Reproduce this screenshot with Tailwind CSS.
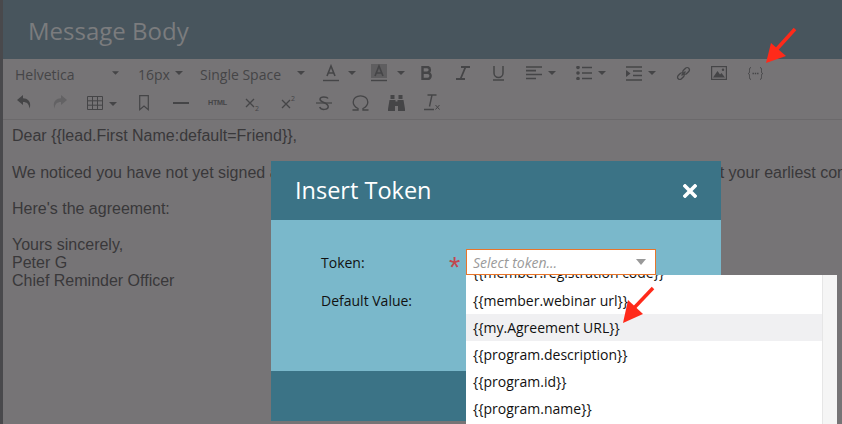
<!DOCTYPE html>
<html><head><meta charset="utf-8"><script src="https://cdn.jsdelivr.net/npm/@tailwindcss/browser@4"></script></head>
<body class="m-0 overflow-hidden">
<div class="relative w-[842px] h-[424px] overflow-hidden flex bg-[#767476]">
  <div class="w-[3px] h-full bg-[#49494c] shrink-0"></div>
  <main class="flex-1 min-w-0 flex flex-col">
    <header class="h-[59px] bg-[#48555d] pl-[25px] pt-[11px] text-[24px] leading-[40px] text-[#7b7c7e] font-['Open_Sans',sans-serif]">Message Body</header>
    <div class="h-[61px] border-b border-[#6b696b] font-['Open_Sans',sans-serif] text-[14px] text-[#454547] pl-[12px]">
      <div class="h-[28px] flex items-center">
        <span class="w-[97px] mt-[2px]">Helvetica</span>
        <svg class="w-[7px] h-[4px]" viewBox="0 0 8 4"><path d="M0 0h8L4 4z" fill="#454547"/></svg>
        <span class="ml-[19px] w-[37px] mt-[2px]">16px</span>
        <svg class="w-[8px] h-[4px]" viewBox="0 0 8 4"><path d="M0 0h8L4 4z" fill="#454547"/></svg>
        <span class="ml-[17px] w-[97px] whitespace-nowrap mt-[2px]">Single Space</span>
        <svg class="w-[8px] h-[4px]" viewBox="0 0 8 4"><path d="M0 0h8L4 4z" fill="#454547"/></svg>
        <svg class="ml-[18px] w-[16px] h-[19px]" viewBox="0 0 16 19" fill="none"><path d="M4 12 8 2l4 10M5.500 9h5" stroke="#454547" stroke-width="1.600"/><path d="M0 16.500h16" stroke="#454547" stroke-width="1.400"/></svg>
        <svg class="ml-[9px] w-[8px] h-[4px]" viewBox="0 0 8 4"><path d="M0 0h8L4 4z" fill="#454547"/></svg>
        <svg class="ml-[15px] w-[16px] h-[19px]" viewBox="0 0 16 19" fill="none"><path d="M0 0h16v14H0z" fill="#5f5e60"/><path d="M4 12 8 2l4 10M5.500 9h5" stroke="#454547" stroke-width="1.600"/><path d="M0 16.500h16" stroke="#454547" stroke-width="1.400"/></svg>
        <svg class="ml-[10px] w-[8px] h-[4px]" viewBox="0 0 8 4"><path d="M0 0h8L4 4z" fill="#454547"/></svg>
        <svg class="ml-[16px] w-[11px] h-[14px]" viewBox="0 0 11 14" fill="none"><path d="M1.500 1h4.500a2.700 2.700 0 0 1 0 5.700H1.500zM1.500 6.700h5a2.900 2.900 0 0 1 0 6.300h-5z" stroke="#454547" stroke-width="2.400"/></svg>
        <svg class="ml-[24px] w-[14px] h-[14px]" viewBox="0 0 14 14" fill="none"><path d="M5 1h9M0 13h9M9.500 1 4.500 13" stroke="#454547" stroke-width="1.800"/></svg>
        <svg class="ml-[23px] w-[11px] h-[15px]" viewBox="0 0 11 15" fill="none"><path d="M1 0v7a4.500 4.500 0 0 0 9 0V0M0 14h11" stroke="#454547" stroke-width="1.500"/></svg>
        <svg class="ml-[22px] w-[16px] h-[14px]" viewBox="0 0 16 14" fill="none"><path d="M0 1h16M0 4.700h10M0 8.500h16M0 12.500h10" stroke="#454547" stroke-width="1.700"/></svg>
        <svg class="ml-[6px] w-[8px] h-[4px]" viewBox="0 0 8 4"><path d="M0 0h8L4 4z" fill="#454547"/></svg>
        <svg class="ml-[20px] w-[16px] h-[14px]" viewBox="0 0 16 14" fill="none"><path d="M6 1.500h10M6 7h10M6 12.500h10" stroke="#454547" stroke-width="1.700"/><circle cx="2" cy="1.500" r="1.800" fill="#454547"/><circle cx="2" cy="7" r="1.800" fill="#454547"/><circle cx="2" cy="12.500" r="1.800" fill="#454547"/></svg>
        <svg class="ml-[6px] w-[8px] h-[4px]" viewBox="0 0 8 4"><path d="M0 0h8L4 4z" fill="#454547"/></svg>
        <svg class="ml-[20px] w-[16px] h-[15px]" viewBox="0 0 16 15" fill="none"><path d="M0 1h16M7 5h9M7 9.500h9M0 14h16" stroke="#454547" stroke-width="1.700"/><path d="M0 4v7l4.500-3.500z" fill="#454547"/></svg>
        <svg class="ml-[6px] w-[8px] h-[4px]" viewBox="0 0 8 4"><path d="M0 0h8L4 4z" fill="#454547"/></svg>
        <svg class="ml-[20px] w-[15px] h-[15px]" viewBox="0 0 15 15" fill="none"><g stroke="#454547" stroke-width="1.300"><rect x="-2.800" y="-2.300" width="7.500" height="4.600" rx="2.300" transform="translate(4.200 10.800) rotate(-45)"/><rect x="-4.700" y="-2.300" width="7.500" height="4.600" rx="2.300" transform="translate(10.800 4.200) rotate(-45)"/><path d="M5.500 9.500 9.500 5.500"/></g></svg>
        <svg class="ml-[20px] w-[16px] h-[14px]" viewBox="0 0 16 14" fill="none"><rect x=".6" y=".6" width="14.800" height="12.800" stroke="#454547" stroke-width="1.200"/><path d="M2 11.500 6.500 5 9 8.500l1.500-1.500 3.500 4.500z" fill="#454547"/><circle cx="12" cy="3.800" r="1.200" fill="#454547"/></svg>
        <svg class="ml-[21px] w-[15px] h-[13px]" viewBox="0 0 15 13" fill="none"><path d="M3 .6C1.500.6 1.500 1.500 1.500 3.500S1.500 6 .4 6.500C1.500 7 1.500 8 1.500 9.500s0 2.900 1.500 2.900M12 .6c1.500 0 1.500.9 1.500 2.900s0 2.500 1.100 3c-1.100.5-1.100 1.500-1.100 3s0 2.900-1.500 2.900" stroke="#454547"/><path d="M4.500 6.500h1.400M6.800 6.500h1.400M9.100 6.500h1.400" stroke="#454547" stroke-width="1.400"/></svg>
      </div>
      <div class="h-[31px] flex items-center">
        <svg class="ml-[2px] w-[14px] h-[15px]" viewBox="0 0 14 15"><path d="M6 0 0 5l6 5V7c4 0 6 2 6.500 6.500C14.500 8 12 3.500 6 3.300z" fill="#454547"/></svg>
        <svg class="ml-[22px] w-[14px] h-[15px]" viewBox="0 0 14 15"><path d="M8 0l6 5-6 5V7C4 7 2 9 1.500 13.500-.5 8 2 3.500 8 3.300z" fill="#636264"/></svg>
        <svg class="ml-[20px] w-[16px] h-[14px]" viewBox="0 0 16 14" fill="none"><path d="M.5.500h15v13H.5zM.5 4.800h15M.5 9.200h15M5.500.500v13M10.500.500v13" stroke="#454547"/></svg>
        <svg class="ml-[6px] w-[8px] h-[4px] mt-[3px]" viewBox="0 0 8 4"><path d="M0 0h8L4 4z" fill="#454547"/></svg>
        <svg class="ml-[22px] w-[10px] h-[16px]" viewBox="0 0 10 16" fill="none"><path d="M.7.700h8.600v14L5 11 .7 14.700z" stroke="#454547" stroke-width="1.200"/></svg>
        <svg class="ml-[24px] w-[16px] h-[2px]" viewBox="0 0 16 2"><path d="M0 0h16v2H0z" fill="#454547"/></svg>
        <span class="ml-[19px] w-[16px] text-[8px] font-bold leading-none font-['Liberation_Sans',sans-serif] tracking-[-0.3px] scale-x-90 origin-left">HTML</span>
        <span class="ml-[21px] w-[14px] h-[16px] relative"><svg class="w-[10px] h-[10px] mt-[3px]" viewBox="0 0 10 10" fill="none"><path d="M1 1l8 8M9 1 1 9" stroke="#454547" stroke-width="1.300"/></svg><span class="absolute left-[10px] top-[10px] text-[7px] leading-none">2</span></span>
        <span class="ml-[22px] w-[14px] h-[16px] relative"><svg class="w-[10px] h-[10px] mt-[4px]" viewBox="0 0 10 10" fill="none"><path d="M1 1l8 8M9 1 1 9" stroke="#454547" stroke-width="1.300"/></svg><span class="absolute left-[10px] top-[0px] text-[7px] leading-none">2</span></span>
        <svg class="ml-[21px] w-[16px] h-[16px]" viewBox="0 0 16 16" fill="none"><path d="M12 3.500C11 1.500 4.500 1 4 4c-.5 3.500 8 3.500 8.200 7.500C12.400 15 5 15.500 3.700 12" stroke="#454547" stroke-width="1.500"/><path d="M0 8h16" stroke="#454547" stroke-width="1.200"/></svg>
        <svg class="ml-[20px] w-[17px] h-[16px]" viewBox="0 0 17 16" fill="none"><path d="M.5 15h5.500v-1.500C3 12 1.200 10 1.200 7 1.200 3.500 4.500.8 8.500.8S15.800 3.500 15.800 7c0 3-1.800 5-4.800 6.500V15h5.500" stroke="#454547" stroke-width="1.300"/></svg>
        <svg class="ml-[19px] w-[17px] h-[16px]" viewBox="0 0 17 16"><path d="M2.500 0h4v4h-4zM10.500 0h4v4h-4zM1.500 5h6v1.500h2V5h6L17 14v2H10v-5H7v5H0v-2z" fill="#454547"/></svg>
        <svg class="ml-[19px] w-[17px] h-[17px]" viewBox="0 0 17 17" fill="none"><path d="M3.500 1h9M8 1 5.500 12.500M0 15.500h10" stroke="#454547" stroke-width="1.400"/><path d="M11.500 11l4 4.500M15.500 11l-4 4.500" stroke="#454547"/></svg>
      </div>
    </div>
    <article class="pl-[9px] pt-[7px] font-['Liberation_Sans',sans-serif] text-[16px] leading-[18px] text-[#39383a] whitespace-nowrap">
      <p>Dear {{lead.First Name:default=Friend}},</p>
      <p class="mt-[19px]">We noticed you have not yet signed a copy of our agreement. Please view the link here and sign it at your earliest convenience.</p>
      <p class="mt-[18px]">Here's the agreement:</p>
      <p class="mt-[18px]">Yours sincerely,</p>
      <p>Peter G</p>
      <p>Chief Reminder Officer</p>
    </article>
  </main>

  <section class="absolute left-[271px] top-[161px] w-[450px] h-[260px] flex flex-col font-['Open_Sans',sans-serif]">
    <div class="h-[59px] bg-[#3b7386] flex items-center justify-between pl-[24px] pr-[24px] text-white">
      <h2 class="text-[23.500px] leading-none">Insert Token</h2>
      <svg class="w-[14px] h-[14px]" viewBox="0 0 14 14" fill="none"><path d="M2 2l10 10M12 2 2 12" stroke="#fff" stroke-width="3.600" stroke-linecap="square"/></svg>
    </div>
    <div class="h-[151px] bg-[#7ab8cb] pl-[50px] pt-[29px] text-[14px] text-[#111]">
      <div class="h-[26px] flex items-center relative">
        <span>Token:</span>
        <span class="absolute left-[128px] top-[3px] text-[29px] leading-[30px] text-[#c2474f] font-['Liberation_Sans',sans-serif]">*</span>
      </div>
      <div class="mt-[12px] h-[26px] flex items-center">Default Value:</div>
    </div>
    <div class="h-[50px] bg-[#3b7386]"></div>
  </section>

  <div class="absolute left-[466px] top-[249px] w-[190px] h-[26px] bg-white border border-[#e8752a] flex items-center justify-between pl-[6px] pr-[9px] font-['Open_Sans',sans-serif] italic text-[14px] text-[#9a9a9a]">
    <span>Select token...</span>
    <svg class="w-[10px] h-[6px]" viewBox="0 0 10 6"><path d="M0 0h10L5 6z" fill="#999"/></svg>
  </div>
  <ul class="absolute left-[466px] top-[275px] w-[371px] h-[149px] bg-white flex flex-col font-['Open_Sans',sans-serif] text-[14px] text-[#111] overflow-hidden border-r-[15px] border-[#f5f5f5]">
    <li class="-mt-[15px] h-[26px] leading-[26px] pl-[7px] shrink-0">{{member.registration code}}</li>
    <li class="mt-[1px] h-[27px] leading-[27px] pl-[7px] shrink-0">{{member.webinar url}}</li>
    <li class="h-[27px] leading-[27px] pl-[7px] shrink-0 bg-[#f0f0f2]">{{my.Agreement URL}}</li>
    <li class="h-[27px] leading-[27px] pl-[7px] shrink-0">{{program.description}}</li>
    <li class="h-[27px] leading-[27px] pl-[7px] shrink-0">{{program.id}}</li>
    <li class="h-[27px] leading-[27px] pl-[7px] shrink-0">{{program.name}}</li>
  </ul>
  <div class="absolute left-[822px] top-[275px] w-px h-[149px] bg-[#e6e6e6]"></div>

  <svg class="absolute left-0 top-0 w-[842px] h-[424px] pointer-events-none" viewBox="0 0 842 424" fill="none">
    <path d="M795 29 776 50" stroke="#ff2a1a" stroke-width="3.500"/><path d="M766 63 771 43 786 56z" fill="#ff2a1a"/>
    <path d="M653 288 634 308" stroke="#ff2a1a" stroke-width="3.500"/><path d="M623 323 628 300 643 314z" fill="#ff2a1a"/>
  </svg>
</div>
</body></html>
